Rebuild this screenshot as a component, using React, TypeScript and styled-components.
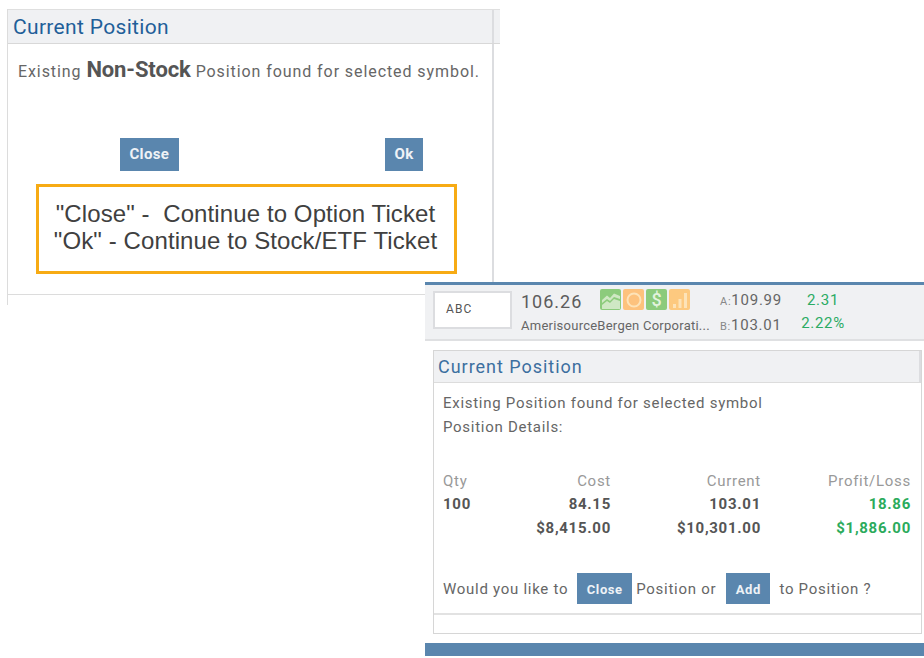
import React from 'react'
import styled, { createGlobalStyle } from 'styled-components'

const GlobalStyle = createGlobalStyle`
  html, body {
    margin: 0;
    padding: 0;
    background: white;
  }
  body {
    font-family: Roboto, "Liberation Sans", sans-serif;
    color: #555;
    width: 924px;
    height: 658px;
    overflow: hidden;
  }
`

const ChartIcon = () => (
  <svg width="20" height="20" viewBox="0 0 20 20">
    <path d="M1 10 L6 5.5 L9 8 L13 3.5 L19 6 V9 L13 7 L9 11 L6 9 L1 13 Z" fill="#cfe8c4" />
    <path d="M1 15 L6 11 L9 13 L13 9 L19 11 V19 H1 Z" fill="#cfe8c4" />
  </svg>
)

const CircleIcon = () => (
  <svg width="20" height="20" viewBox="0 0 20 20">
    <circle cx="10" cy="10" r="6.5" fill="none" stroke="#fde3b8" strokeWidth="2" />
  </svg>
)

const BarsIcon = () => (
  <svg width="20" height="20" viewBox="0 0 20 20">
    <rect x="3" y="14" width="3" height="4" fill="#fde3b8" />
    <rect x="8.5" y="9" width="3" height="9" fill="#fde3b8" />
    <rect x="14" y="3" width="3" height="15" fill="#fde3b8" />
  </svg>
)

const App = () => {
  return (
    <Canvas>
      <GlobalStyle />
      <TicketWindow>
        <WindowHeader>
          <LargeTitle>Current Position</LargeTitle>
        </WindowHeader>
        <TicketBody>
          <Message>
            Existing <Strong>Non-Stock</Strong> Position found for selected symbol.
          </Message>
          <ButtonRow>
            <Button>Close</Button>
            <Button>Ok</Button>
          </ButtonRow>
          <Callout>
            <div>"Close" -&nbsp; Continue to Option Ticket</div>
            <div>"Ok" - Continue to Stock/ETF Ticket</div>
          </Callout>
        </TicketBody>
      </TicketWindow>

      <QuoteWindow>
        <Toolbar>
          <SymbolBox>ABC</SymbolBox>
          <QuoteInfo>
            <PriceRow>
              <Price>106.26</Price>
              <Badges>
                <Badge color="#8ccb7c"><ChartIcon /></Badge>
                <Badge color="#fdc27d"><CircleIcon /></Badge>
                <Badge color="#8ccb7c"><Dollar>$</Dollar></Badge>
                <Badge color="#fdc97f"><BarsIcon /></Badge>
              </Badges>
            </PriceRow>
            <CompanyName>AmerisourceBergen Corporati...</CompanyName>
          </QuoteInfo>
          <BidAsk>
            <BidAskRow><small>A:</small>109.99</BidAskRow>
            <BidAskRow><small>B:</small>103.01</BidAskRow>
          </BidAsk>
          <Change>
            <div>2.31</div>
            <div>2.22%</div>
          </Change>
        </Toolbar>

        <PositionPanel>
          <PanelHeader>
            <SmallTitle>Current Position</SmallTitle>
          </PanelHeader>
          <PanelBody>
            <Lines>
              <div>Existing Position found for selected symbol</div>
              <div>Position Details:</div>
            </Lines>
            <Table>
              <HeadCell>Qty</HeadCell>
              <HeadCell align="right">Cost</HeadCell>
              <HeadCell align="right">Current</HeadCell>
              <HeadCell align="right">Profit/Loss</HeadCell>
              <ValueCell>100</ValueCell>
              <ValueCell align="right">84.15</ValueCell>
              <ValueCell align="right">103.01</ValueCell>
              <ValueCell align="right" $gain>18.86</ValueCell>
              <ValueCell />
              <ValueCell align="right">$8,415.00</ValueCell>
              <ValueCell align="right">$10,301.00</ValueCell>
              <ValueCell align="right" $gain>$1,886.00</ValueCell>
            </Table>
            <Question>
              <span>Would you like to</span>
              <SmallButton>Close</SmallButton>
              <span>Position or</span>
              <SmallButton $wide>Add</SmallButton>
              <span>to Position ?</span>
            </Question>
          </PanelBody>
          <PanelFooter />
        </PositionPanel>

        <BottomBar />
      </QuoteWindow>
    </Canvas>
  )
}

const Canvas = styled.div`
  position: relative;
  width: 924px;
  height: 658px;
  overflow: hidden;
`

const TicketWindow = styled.div`
  position: absolute;
  left: 7px;
  top: 9px;
  width: 493px;
  height: 296px;
  box-sizing: border-box;
  border-left: 1px solid #dcdcdc;
`

const WindowHeader = styled.div`
  height: 35px;
  box-sizing: border-box;
  background: #f0f1f3;
  border-top: 1px solid #dfdfdf;
  border-bottom: 1px solid #d8d8d8;
  padding-left: 5px;
  display: flex;
  align-items: center;
  position: relative;

  &::after {
    content: "";
    position: absolute;
    left: 484px;
    top: 0;
    bottom: 0;
    width: 2px;
    background: #dcdde0;
  }
`

const LargeTitle = styled.div`
  font-size: 21px;
  letter-spacing: 0.33px;
  color: #1f5f99;
`

const TicketBody = styled.div`
  width: 486px;
  height: 251px;
  box-sizing: border-box;
  border-right: 2px solid #dcdde0;
  border-bottom: 1px solid #dcdcdc;
  padding-top: 14px;
`

const Message = styled.div`
  height: 24px;
  padding-left: 10px;
  font-size: 16px;
  line-height: 24px;
  letter-spacing: 0.92px;
  color: #666;
  white-space: nowrap;
`

const Strong = styled.b`
  font-size: 22px;
  letter-spacing: -0.1px;
  color: #555;
`

const ButtonRow = styled.div`
  display: flex;
  justify-content: space-between;
  padding: 0 69px 0 112px;
  margin-top: 56px;
`

const Button = styled.div`
  height: 33px;
  box-sizing: border-box;
  padding: 0 9.5px 1px;
  display: flex;
  align-items: center;
  background: #5a86ae;
  color: #eef2f6;
  font-size: 15px;
  font-weight: 700;
  letter-spacing: 0.3px;
`

const Callout = styled.div`
  width: 421px;
  height: 90px;
  box-sizing: border-box;
  margin: 13px 0 0 28px;
  padding: 13px 2px 0 0;
  border: 3px solid #f7ab14;
  text-align: center;
  font-family: "Liberation Sans", Arial, sans-serif;
  font-size: 24px;
  line-height: 27px;
  letter-spacing: 0.1px;
  color: #404040;
  white-space: nowrap;
`

const QuoteWindow = styled.div`
  position: absolute;
  left: 425px;
  top: 282px;
  width: 499px;
  height: 374px;
  display: flex;
  flex-direction: column;
  background: white;
`

const Toolbar = styled.div`
  height: 59px;
  box-sizing: border-box;
  border-top: 3px solid #5a86ae;
  border-bottom: 2px solid #dfe0e2;
  background: #f0f1f3;
  padding: 6px 0 0 8px;
  display: flex;
  align-items: flex-start;
`

const SymbolBox = styled.div`
  width: 79px;
  height: 38px;
  box-sizing: border-box;
  border: 2px solid #dcdde0;
  background: white;
  padding: 0 0 2px 11px;
  display: flex;
  align-items: center;
  font-size: 12px;
  letter-spacing: 1.1px;
  color: #555;
`

const QuoteInfo = styled.div`
  width: 200px;
  margin-left: 9px;
`

const PriceRow = styled.div`
  display: flex;
  align-items: flex-start;
`

const Price = styled.div`
  width: 79px;
  font-size: 18px;
  line-height: 22px;
  letter-spacing: 1px;
  color: #5c5c5c;
`

const Badges = styled.div`
  display: flex;
  gap: 2px;
  margin-top: -2px;
`

const Badge = styled.div<{ color: string }>`
  width: 21px;
  height: 21px;
  border-radius: 2px;
  background: ${props => props.color};
  display: flex;
  align-items: center;
  justify-content: center;
`

const Dollar = styled.span`
  font-size: 18px;
  font-weight: 500;
  color: #e3f3dc;
`

const CompanyName = styled.div`
  margin-top: 5px;
  font-size: 13px;
  letter-spacing: 0.25px;
  color: #666;
  white-space: nowrap;
`

const BidAsk = styled.div`
  margin-left: -1px;
  display: flex;
  flex-direction: column;
  gap: 5px;
  width: 80px;
`

const BidAskRow = styled.div`
  font-size: 15px;
  line-height: 18px;
  letter-spacing: 0.75px;
  color: #666;
  white-space: nowrap;

  small {
    font-size: 11px;
    color: #888;
  }
`

const Change = styled.div`
  width: 52px;
  display: flex;
  flex-direction: column;
  align-items: center;
  gap: 5px;
  margin-left: -3px;
  font-size: 15px;
  line-height: 18px;
  letter-spacing: 0.7px;
  color: #2bab63;
`

const PositionPanel = styled.div`
  width: 489px;
  height: 285px;
  box-sizing: border-box;
  margin: 9px 0 0 8px;
  border: 1px solid #d6d6d6;
  display: flex;
  flex-direction: column;
`

const PanelHeader = styled.div`
  height: 32px;
  box-sizing: border-box;
  background: #f0f1f3;
  border-bottom: 1px solid #dcdcdc;
  padding: 1px 0 0 4px;
  display: flex;
  align-items: center;
  position: relative;

  &::after {
    content: "";
    position: absolute;
    right: 0;
    top: 0;
    bottom: 0;
    width: 2px;
    background: #dcdde0;
  }
`

const SmallTitle = styled.div`
  font-size: 18px;
  letter-spacing: 0.97px;
  color: #3c6f9f;
`

const PanelBody = styled.div`
  flex: 1;
  padding: 8px 8px 0 9px;
  font-size: 15px;
  letter-spacing: 0.72px;
  color: #666;
`

const Lines = styled.div`
  line-height: 24px;
`

const Table = styled.div`
  display: grid;
  grid-template-columns: 60px 108px 150px 150px;
  grid-auto-rows: 23.5px;
  margin-top: 30px;
  align-items: center;
`

const HeadCell = styled.div<{ align?: string }>`
  text-align: ${props => props.align || 'left'};
  color: #999;
`

const ValueCell = styled.div<{ align?: string; $gain?: boolean }>`
  text-align: ${props => props.align || 'left'};
  font-weight: 700;
  color: ${props => (props.$gain ? '#2bab5c' : '#555')};
`

const Question = styled.div`
  display: flex;
  align-items: center;
  margin-top: 34px;
  white-space: nowrap;
`

const SmallButton = styled.div<{ $wide?: boolean }>`
  height: 31px;
  box-sizing: border-box;
  padding: 2px 9.5px 0;
  margin: 0 ${props => (props.$wide ? '9px' : '4px')} 0 ${props => (props.$wide ? '10px' : '9px')};
  display: flex;
  align-items: center;
  background: #5a86ae;
  color: #eef2f6;
  font-size: 13px;
  font-weight: 700;
  letter-spacing: 0.6px;
`

const PanelFooter = styled.div`
  height: 18px;
  border-top: 2px solid #e2e2e2;
`

const BottomBar = styled.div`
  height: 13px;
  margin-top: 9px;
  background: #5a86ae;
`

export default App
